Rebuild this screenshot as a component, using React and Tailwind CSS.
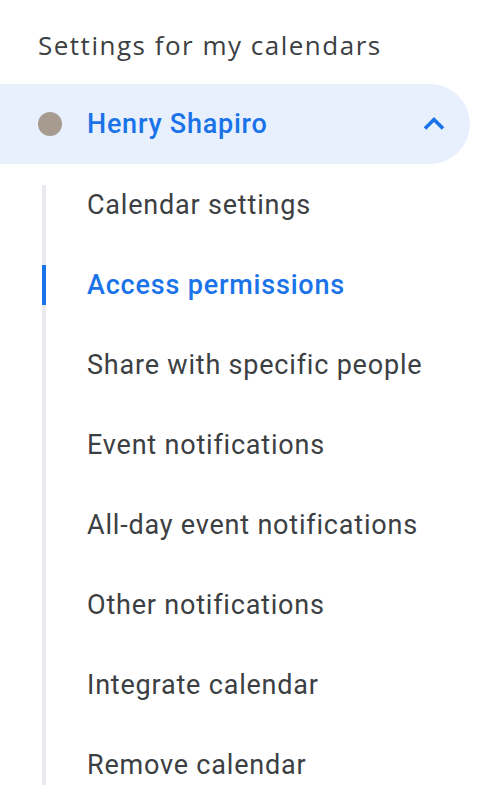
import React from "react";

const items = [
  "Calendar settings",
  "Access permissions",
  "Share with specific people",
  "Event notifications",
  "All-day event notifications",
  "Other notifications",
  "Integrate calendar",
  "Remove calendar",
];

const ChevronUp = () => (
  <svg width="24" height="24" viewBox="0 0 24 24" className="w-6 h-6">
    <path d="M3 16.5 L12 7.5 L21 16.5" fill="none" stroke="#1a73e8" strokeWidth="3.6" />
  </svg>
);

export default function App() {
  const active = "Access permissions";

  return (
    <div className="w-[490px] h-[808px] bg-white overflow-hidden font-['Roboto',sans-serif]">
      {/* header */}
      <h2 className="pl-[38px] pt-[28px] text-[26px] leading-[34px] text-[#3c4043] font-['Open_Sans',sans-serif] tracking-[1.5px]">
        Settings for my calendars
      </h2>

      {/* calendar row */}
      <div className="mt-[22px] w-[470px] h-[80px] flex items-center bg-[#e8f0fe] rounded-r-full pl-[38px] pr-[24px]">
        <span className="w-6 h-6 rounded-full bg-[#a69b8e] shrink-0" />
        <span className="ml-[25px] text-[27px] tracking-[0.75px] font-medium text-[#1a73e8] flex-1">
          Henry Shapiro
        </span>
        <ChevronUp />
      </div>

      {/* sub menu */}
      <ul className="mt-[21px] ml-[42px] border-l-4 border-[#e8eaed] flex flex-col gap-10">
        {items.map((item) => (
          <li
            key={item}
            className={`relative h-10 flex items-center pl-[41px] text-[27px] tracking-[0.8px] ${
              item === active ? "text-[#1a73e8] font-medium" : "text-[#3c4043]"
            }`}
          >
            {item === active && (
              <span className="absolute -left-1 top-0 h-10 w-1 bg-[#1a73e8]" />
            )}
            {item}
          </li>
        ))}
      </ul>
    </div>
  );
}
